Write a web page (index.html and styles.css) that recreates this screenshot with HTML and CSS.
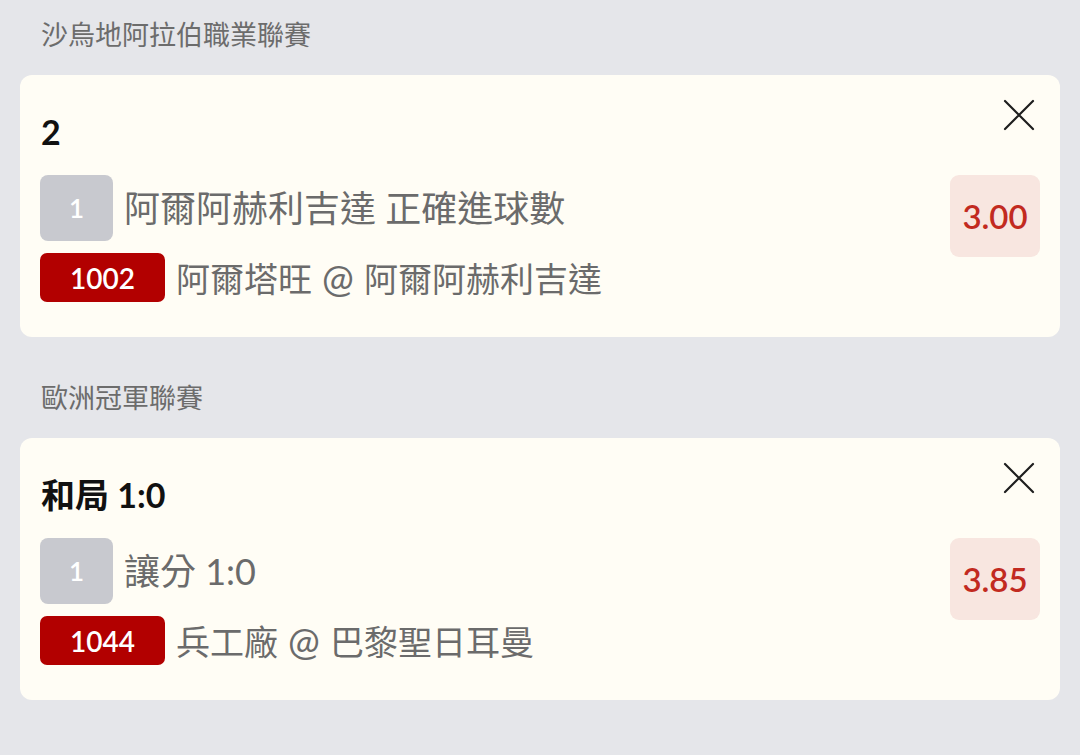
FILE: index.html
```html
<!DOCTYPE html>
<html lang="zh-Hant">
<head>
<meta charset="utf-8">
<link rel="stylesheet" href="styles.css">
</head>
<body>
<div class="page">
  <section class="league">
    <div class="league-name">沙烏地阿拉伯職業聯賽</div>
    <div class="card">
      <div class="card-head">
        <div class="title">2</div>
        <button class="close" aria-label="close">
          <svg width="32" height="32" viewBox="0 0 32 32"><path d="M2 2 L30 30 M30 2 L2 30" stroke="#1e1e1e" stroke-width="2.2" stroke-linecap="round" fill="none"/></svg>
        </button>
      </div>
      <div class="card-body">
        <div class="lines">
          <div class="line">
            <span class="leg">1</span>
            <span class="txt">阿爾阿赫利吉達 正確進球數</span>
          </div>
          <div class="line">
            <span class="code">1002</span>
            <span class="txt match">阿爾塔旺<span class="at">@</span>阿爾阿赫利吉達</span>
          </div>
        </div>
        <div class="odds">3.00</div>
      </div>
    </div>
  </section>
  <section class="league">
    <div class="league-name">歐洲冠軍聯賽</div>
    <div class="card">
      <div class="card-head">
        <div class="title">和局 1:0</div>
        <button class="close" aria-label="close">
          <svg width="32" height="32" viewBox="0 0 32 32"><path d="M2 2 L30 30 M30 2 L2 30" stroke="#1e1e1e" stroke-width="2.2" stroke-linecap="round" fill="none"/></svg>
        </button>
      </div>
      <div class="card-body">
        <div class="lines">
          <div class="line">
            <span class="leg">1</span>
            <span class="txt">讓分 1:0</span>
          </div>
          <div class="line">
            <span class="code">1044</span>
            <span class="txt match">兵工廠<span class="at">@</span>巴黎聖日耳曼</span>
          </div>
        </div>
        <div class="odds">3.85</div>
      </div>
    </div>
  </section>
</div>
</body>
</html>
```

FILE: styles.css
```css
* { box-sizing: border-box; }
html, body {
  margin: 0;
  padding: 0;
  background: #e5e6ea;
  font-family: Lato, "Noto Sans CJK TC", sans-serif;
}
.page {
  padding: 0 20px;
  width: 1080px;
  height: 755px;
  overflow: hidden;
}
.league-name {
  height: 75px;
  padding-top: 16px;
  padding-left: 21px;
  font-size: 27px;
  line-height: 38px;
  color: #6c6c6c;
}
.card {
  background: #fffdf5;
  border-radius: 12px;
  padding: 24px 20px 36px 20px;
  margin-bottom: 26px;
  height: 262px;
}
.card-head {
  display: flex;
  justify-content: space-between;
  align-items: flex-start;
  height: 76px;
}
.title {
  margin-top: 12px;
  font-size: 34px;
  line-height: 42px;
  font-weight: 700;
  color: #111;
  padding-left: 1px;
}
.close {
  border: 0;
  background: none;
  padding: 0;
  margin: 0 5px 0 0;
  width: 32px;
  height: 32px;
  display: flex;
}
.card-body {
  display: flex;
  justify-content: space-between;
  align-items: flex-start;
}
.lines {
  display: flex;
  flex-direction: column;
  gap: 12px;
}
.line {
  display: flex;
  align-items: center;
}
.leg {
  width: 73px;
  height: 66px;
  border-radius: 8px;
  background: #c8c9cf;
  color: #fff;
  font-size: 26px;
  font-weight: 600;
  display: flex;
  align-items: center;
  justify-content: center;
  margin-right: 11px;
}
.code {
  width: 125px;
  height: 49px;
  border-radius: 7px;
  background: #b20000;
  color: #fff;
  font-size: 28px;
  font-weight: 600;
  display: flex;
  align-items: center;
  justify-content: center;
  margin-right: 11px;
}
.txt {
  font-size: 36px;
  line-height: 44px;
  color: #6b6b6b;
  white-space: pre;
}
.txt.match {
  font-size: 34px;
}
.at {
  display: inline-block;
  width: 52px;
  text-align: center;
  font-size: 38px;
  line-height: 44px;
}
.odds {
  width: 90px;
  height: 82px;
  border-radius: 9px;
  background: #f8e6e0;
  color: #c22a20;
  font-size: 33px;
  font-weight: 600;
  display: flex;
  align-items: center;
  justify-content: center;
}
```
